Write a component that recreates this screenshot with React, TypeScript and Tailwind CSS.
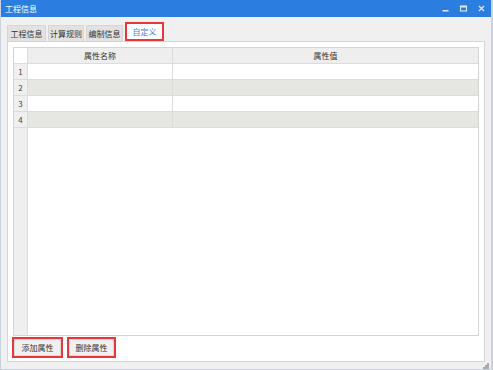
import React from 'react';

const font = { fontFamily: '"Noto Sans CJK SC", "Noto Sans", sans-serif' };

const tabs = [
  { label: '工程信息', w: 'w-[39px]' },
  { label: '计算规则', w: 'w-[36px]' },
  { label: '编制信息', w: 'w-[37px]' },
];
const rows = [1, 2, 3, 4];

export default function App() {
  return (
    <div
      className="w-[493px] h-[370px] bg-[#f0f0f0] flex flex-col border-l border-r-2 border-b border-[#c9d2de] text-[8px] text-[#333]"
      style={font}
    >
      {/* title bar */}
      <div className="h-[17px] bg-[#2b7ee0] flex items-center justify-between pl-[4px] pr-[5px] text-white">
        <span className="leading-none">工程信息</span>
        <div className="flex items-center gap-[9px]">
          <svg width="9" height="9" viewBox="0 0 9 9">
            <rect x="1.5" y="6" width="6" height="1.5" fill="#dce9fa" />
          </svg>
          <svg width="9" height="9" viewBox="0 0 9 9">
            <rect x="1.5" y="2" width="6" height="5" fill="none" stroke="#dce9fa" strokeWidth="1.1" />
            <rect x="1.5" y="2" width="6" height="1.5" fill="#dce9fa" />
          </svg>
          <svg width="9" height="9" viewBox="0 0 9 9">
            <path d="M2 2 L7 7 M7 2 L2 7" stroke="#dce9fa" strokeWidth="1.3" />
          </svg>
        </div>
      </div>

      {/* tabs */}
      <div className="flex items-end gap-[2px] pl-[6px] mt-[7px] h-[17px]">
        {tabs.map((t) => (
          <div
            key={t.label}
            className={`${t.w} h-[16px] bg-[#e2e2e2] border border-b-0 border-[#d6d6d6] flex items-center justify-center leading-none text-[#333]`}
          >
            {t.label}
          </div>
        ))}
        <div className="w-[39px] h-[19px] border-2 border-[#e8373a] flex">
          <div className="flex-1 bg-white flex items-center justify-center leading-none text-[#3d7fd8]">
            自定义
          </div>
        </div>
      </div>

      {/* panel */}
      <div className="ml-[6px] w-[478px] h-[321px] border border-[#d6d6d6] bg-white flex flex-col px-[5px] pt-[5px]">
        <div className="w-[466px] h-[289px] border border-[#d4d4d4] flex bg-white">
          {/* row number column */}
          <div className="w-[14px] flex flex-col bg-[#efefef] border-r border-[#dcdcdc]">
            <div className="h-[16px] bg-white border-b border-[#dcdcdc]" />
            {rows.map((r) => (
              <div
                key={r}
                className="h-[16px] flex items-center justify-center border-b border-[#dcdcdc] leading-none text-[#444]"
              >
                {r}
              </div>
            ))}
          </div>
          <div className="flex-1 flex flex-col">
            <div className="h-[16px] flex bg-[#eeeeee] border-b border-[#dcdcdc]">
              <div className="w-[145px] flex items-center justify-center border-r border-[#dcdcdc] leading-none">
                属性名称
              </div>
              <div className="flex-1 flex items-center justify-center leading-none">属性值</div>
            </div>
            {rows.map((r) => (
              <div
                key={r}
                className={`h-[16px] flex border-b border-[#dcdcdc] ${r % 2 === 0 ? 'bg-[#e6e6e3]' : 'bg-white'}`}
              >
                <div className="w-[145px] border-r border-[#dcdcdc]" />
                <div className="flex-1" />
              </div>
            ))}
          </div>
        </div>

        {/* buttons */}
        <div className="flex gap-[4px] mt-[1px] -ml-[1px]">
          {[
            { label: '添加属性', w: 'w-[51px]' },
            { label: '删除属性', w: 'w-[49px]' },
          ].map((b) => (
            <div key={b.label} className={`${b.w} h-[21px] border-2 border-[#e8373a] flex`}>
              <div className="flex-1 bg-[#f0f0f0] border border-[#dadada] flex items-center justify-center leading-none text-[#333]">
                {b.label}
              </div>
            </div>
          ))}
        </div>
      </div>

      {/* resize grip */}
      <div className="flex justify-end pr-[2px] mt-[1px]">
        <svg width="6" height="6" viewBox="0 0 6 6">
          <rect x="4" y="0" width="2" height="2" fill="#aaa" />
          <rect x="2" y="2" width="2" height="2" fill="#aaa" />
          <rect x="4" y="2" width="2" height="2" fill="#aaa" />
          <rect x="0" y="4" width="2" height="2" fill="#aaa" />
          <rect x="2" y="4" width="2" height="2" fill="#aaa" />
          <rect x="4" y="4" width="2" height="2" fill="#aaa" />
        </svg>
      </div>
    </div>
  );
}
